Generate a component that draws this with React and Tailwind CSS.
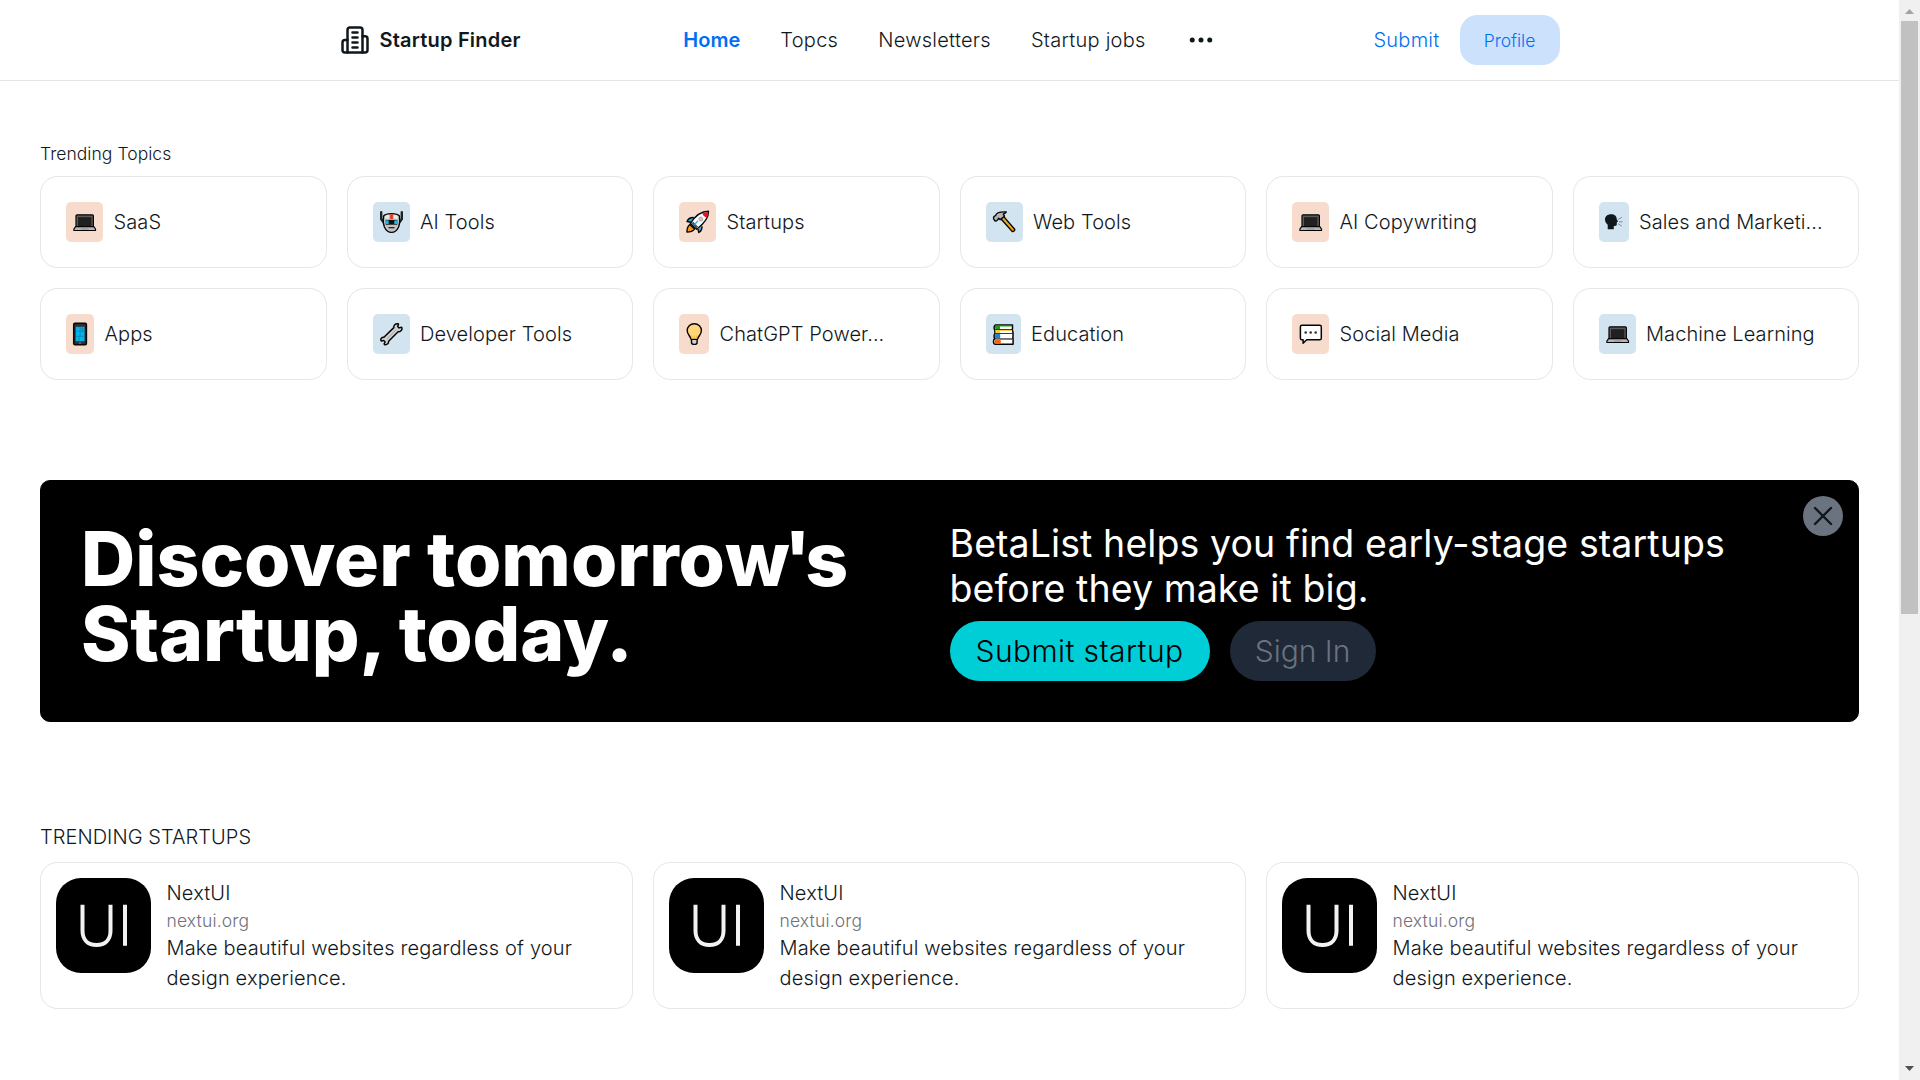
import { Ellipsis, X } from 'lucide-react';

function BuildingLogo() {
  return (
    <svg width="30" height="30" viewBox="0 0 24 24" fill="none" stroke="currentColor" strokeWidth="2" strokeLinecap="round" strokeLinejoin="round">
      <path d="M6 22V4a2 2 0 0 1 2-2h8a2 2 0 0 1 2 2v18Z" />
      <path d="M6 12H4a2 2 0 0 0-2 2v6a2 2 0 0 0 2 2h2" />
      <path d="M18 9h2a2 2 0 0 1 2 2v9a2 2 0 0 1-2 2h-2" />
      <path d="M10 6h4M10 10h4M10 14h4M10 18h4" />
    </svg>
  );
}

function Laptop() {
  return (
    <svg width="37" height="40" viewBox="0 0 37 40" fill="none">
      <path d="M11 12.8h15.400a1 1 0 0 1 1 1V25H10V13.800a1 1 0 0 1 1-1Z" fill="#5a5a5a" stroke="#050505" strokeWidth="1.200" />
      <rect x="12" y="15.200" width="13.400" height="8.800" fill="#202020" />
      <path d="M9.600 24.600h18.200l1.700 2.400v1.500H7.900V27Z" fill="#b5b5b5" stroke="#050505" strokeWidth="1.200" strokeLinejoin="round" />
      <path d="M15 27h7.400" stroke="#8c8c8c" strokeWidth=".8" />
    </svg>
  );
}

function Robot() {
  return (
    <svg width="37" height="40" viewBox="0 0 37 40" fill="none">
      <path d="M8.200 10.200v7l2.500 3.300M28.800 10.200v7l-2.500 3.300" stroke="#222" strokeWidth="2.400" strokeLinecap="round" />
      <path d="M10.600 14c1.300-1.800 4-2.300 7.900-2.300s6.600.5 7.900 2.300c.6 3.900.5 7.600-.8 10.900-1.300 3-3.800 5.400-7.100 5.400s-5.800-2.400-7.100-5.400c-1.300-3.300-1.400-7-.8-10.900Z" fill="#c2c2c2" stroke="#050505" strokeWidth="1.300" />
      <path d="M12 14.700c1-1.400 2.300-1.900 4-2v4.100h-4ZM21 12.700c1.700.1 3 .6 4 2v2.100h-4Z" fill="#e8e8e8" />
      <rect x="17.100" y="12.300" width="2.800" height="4.700" fill="#f03a17" />
      <rect x="12.700" y="17.900" width="11.600" height="4.800" fill="#101010" />
      <rect x="13" y="18.400" width="2.700" height="3.600" fill="#19b9ee" />
      <rect x="21.300" y="18.400" width="2.700" height="3.600" fill="#19b9ee" />
      <path d="M15.500 25.700h6" stroke="#151515" strokeWidth="1.200" />
    </svg>
  );
}

function Rocket() {
  return (
    <svg width="37" height="40" viewBox="0 0 37 40" fill="none">
      <path d="M12 20.200 8 19.500c1-2.600 3-4.100 6.700-4M19 27.200l.8 3.300c2.300-1.300 3.400-3.400 3.200-6.300" fill="#26b3ee" stroke="#050505" strokeWidth="1.400" strokeLinejoin="round" />
      <path d="M10.800 22.500c-2 1.500-2.900 4-2.900 7.600 3.600 0 6-1 7.600-3Z" fill="#f7931e" stroke="#050505" strokeWidth="1.400" strokeLinejoin="round" />
      <path d="M29.500 9.300c.2 6-3 11.300-11.800 18l-6.300-5.800C16.800 12.800 23.500 9.300 29.500 9.300Z" fill="#fff" stroke="#050505" strokeWidth="1.400" strokeLinejoin="round" />
      <path d="M28.900 9.900c.1 2-.3 3.900-1.200 5.700-2-.4-4-2.200-4.400-4 1.800-1 3.700-1.600 5.600-1.700Z" fill="#e81224" />
      <circle cx="21.800" cy="17" r="2" fill="#c9c9c9" stroke="#9a9a9a" strokeWidth=".8" />
      <path d="m12.300 21.500 5 4.700 1.800-1.500-4.800-4.900Z" fill="#4b5560" />
      <path d="m15.500 22.700 3.500-4" stroke="#26b3ee" strokeWidth="1.300" />
    </svg>
  );
}

function Hammer() {
  return (
    <svg width="37" height="40" viewBox="0 0 37 40" fill="none">
      <path d="m14.400 16.200 2.700-2.300 11.600 13.300c.7 1-1.600 3-2.600 2.200Z" fill="#f5a70f" stroke="#050505" strokeWidth="1.400" strokeLinejoin="round" />
      <path d="M7.600 16.800c-.4-1.700.6-3 2-3.200.4-2.400 4-4 10.700-3.700-.3 1.300-1.600 1.500-3 2.200l1.200 2.100-4.300 3.400-1.600-1.400c-.5 2-2.500 3.300-3.600 2.600Z" fill="#b5b5b5" stroke="#050505" strokeWidth="1.400" strokeLinejoin="round" />
    </svg>
  );
}

function Speaking() {
  return (
    <svg width="30" height="40" viewBox="0 0 30 40" fill="none">
      <path d="M8.700 27.300v-4.600C6.900 21.200 6 19.300 6 17.400c0-3 2.500-5.100 6-5.100 3.600 0 5.700 2 5.700 4.600l1.300 2.800-1.200.6v2.200c0 1.300-1 1.600-3 1.400v3.400Z" fill="#11181c" />
      <path d="m19.500 17.300 3-1.800M20.300 19.800h2.800M19.500 22l3 1.900" stroke="#667580" strokeWidth=".8" strokeLinecap="round" />
    </svg>
  );
}

function Phone() {
  return (
    <svg width="28" height="40" viewBox="0 0 28 40" fill="none">
      <rect x="7.700" y="9.300" width="12.700" height="21.400" rx="1.300" fill="#303030" stroke="#050505" strokeWidth="1.500" />
      <rect x="9.700" y="12.800" width="8.800" height="14.400" fill="#00b4f1" />
      <path d="M9.700 17.400h8.800M9.700 22.300h8.800M14.100 12.800v9.500M16.500 12.800v4.600M13 22.300v4.900M14.100 15h4.400" stroke="#15789f" strokeWidth=".7" />
      <path d="M13 29h2.200" stroke="#8a8a8a" />
    </svg>
  );
}

function Wrench() {
  return (
    <svg width="37" height="40" viewBox="0 0 37 40" fill="none">
      <path d="m10.900 23.300 9.900-9.700c-.4-2.300 1.500-4.200 4.100-3.900l.6.500-.8 2.200 1.400 1.500 2.300-.7.600.7c.3 2.300-1.500 4-3.900 3.900l-9.500 9.500c.2 2.400-1.700 3.800-4.200 3.200l-.2-.9.900-1.600-1.500-1.600-2.100.7-.7-.9c-.2-2 1-3.100 3.100-2.900Z" fill="#d0d0d0" stroke="#050505" strokeWidth="1.500" strokeLinejoin="round" />
      <path d="m14 24.800 9.500-9.300" stroke="#9b9b9b" strokeWidth=".8" />
    </svg>
  );
}

function Bulb() {
  return (
    <svg width="30" height="40" viewBox="0 0 30 40" fill="none">
      <path d="M12.500 24.500h5.600v4c0 1.200-1.100 1.900-2.800 1.900s-2.800-.7-2.800-1.900Z" fill="#c8d2d8" stroke="#050505" strokeWidth="1.400" />
      <path d="M15.300 9.700c4.200 0 7.100 2.900 7.100 6.800 0 4-2.900 5-4 8.900h-6.200c-1.100-3.900-4-4.900-4-8.900 0-3.900 2.900-6.800 7.100-6.800Z" fill="#ffd67b" stroke="#050505" strokeWidth="1.400" strokeLinejoin="round" />
      <path d="M13 25v-3.600M15.300 25v-3.600M17.600 25v-3.600" stroke="#f2b134" strokeWidth=".9" />
    </svg>
  );
}

function Books() {
  return (
    <svg width="35" height="40" viewBox="0 0 35 40" fill="none">
      <path d="M9.500 10.900h17v3.900l-.3 1.200.8 2v5l-.3.900.4.800v5.500H9.500c-1.600 0-2.100-1.500-2-3 0-1.400.7-2.300 1.500-2.500-1.300-1.200-1.200-4.300 0-5.200l-.2-3.500c-1.200-1.500-.8-4.400.7-5.100Z" fill="#fff" stroke="#050505" strokeWidth="1.500" strokeLinejoin="round" />
      <path d="M9.600 11.500h16.600v1H14v2.700H9.600c-.9-1-.9-2.800 0-3.700Z" fill="#16a016" />
      <path d="M9.600 16h16.400v1.100H14v2H9.600Z" fill="#ffc83d" />
      <path d="M9.600 20h4.600v4.300h-4.600c-1-1-1-3.400 0-4.300Z" fill="#1883d7" />
      <path d="M9.500 25.500h5.300v4.200H9.500c-1.300-.5-1.400-3.400 0-4.200ZM14.500 25.200h12v.8h-12Z" fill="#f7630c" />
      <path d="M9.300 15.500h17M9.300 19.500h17.500M9.300 24.800h17.500" stroke="#050505" strokeWidth=".8" />
    </svg>
  );
}

function Bubble() {
  return (
    <svg width="37" height="40" viewBox="0 0 37 40" fill="none">
      <path d="M10 11.200h17.700c1 0 1.600.6 1.600 1.600v11.400c0 1-.6 1.600-1.600 1.600H14.700l-3.600 3.400v-3.400H10c-1 0-1.600-.6-1.600-1.600V12.800c0-1 .6-1.600 1.600-1.600Z" fill="#fff" stroke="#050505" strokeWidth="1.500" strokeLinejoin="round" />
      <circle cx="13.700" cy="18.500" r="1.300" fill="#333" />
      <circle cx="18.700" cy="18.500" r="1.300" fill="#333" />
      <circle cx="23.700" cy="18.500" r="1.300" fill="#333" />
    </svg>
  );
}

const topics = [
  ['SaaS', Laptop],
  ['AI Tools', Robot],
  ['Startups', Rocket],
  ['Web Tools', Hammer],
  ['AI Copywriting', Laptop],
  ['Sales and Marketi...', Speaking],
  ['Apps', Phone],
  ['Developer Tools', Wrench],
  ['ChatGPT Power...', Bulb],
  ['Education', Books],
  ['Social Media', Bubble],
  ['Machine Learning', Laptop],
];

function Header() {
  return (
    <header className="h-[81px] border-b border-[#e4e4e9]">
      <div className="mx-auto flex h-20 w-[1280px] items-center justify-between px-[30px]">
        <div className="flex flex-1 items-center gap-2.5">
          <BuildingLogo />
          <p className="font-semibold tracking-[0.2px]">Startup Finder</p>
        </div>
        <nav className="flex items-center gap-10 tracking-[0.27px]">
          <a className="font-semibold tracking-normal text-[#0070f3]">Home</a>
          <a>Topcs</a>
          <a>Newsletters</a>
          <a>Startup jobs</a>
          <Ellipsis size={30} />
        </nav>
        <div className="flex flex-1 items-center justify-end gap-5 text-[#0070f3]">
          <a className="tracking-[0.25px]">Submit</a>
          <button className="h-[50px] w-[100px] rounded-[17.5px] bg-[#cce2fc] text-[17.5px] leading-[25px]">Profile</button>
        </div>
      </div>
    </header>
  );
}

function StartupCard() {
  return (
    <article className="flex gap-[15px] rounded-[17.5px] border border-[#e6e6e9] p-[15px]">
      <div className="size-[95px] shrink-0 rounded-[25px] bg-black">
        <svg width="95" height="95" viewBox="0 0 95 95" fill="none" stroke="#f2f2f2" strokeWidth="4">
          <path d="M26.500 26.800v26c0 9 5.500 14.200 14 14.200s14-5.200 14-14.200v-26M69 26.800v41" />
        </svg>
      </div>
      <div className="pl-[0.5px] tracking-[0.15px]">
        <h3>NextUI</h3>
        <p className="text-[17.5px] leading-[25px] text-[#71717a]">nextui.org</p>
        <p>Make beautiful websites regardless of your<br />design experience.</p>
      </div>
    </article>
  );
}

function Scrollbar() {
  return (
    <div className="flex w-[21px] shrink-0 flex-col items-center bg-[#f0f0f0]">
      <div className="flex h-[21px] shrink-0 items-center pt-[2px]">
        <svg width="9" height="5" viewBox="0 0 9 5"><path d="M0 5h9L4.500 0Z" fill="#a3a3a3" /></svg>
      </div>
      <div className="h-[593px] w-[17px] bg-[#c1c1c1]" />
      <div className="mt-auto flex h-[21px] shrink-0 items-center pb-[2px]">
        <svg width="9" height="5" viewBox="0 0 9 5"><path d="M0 0h9L4.500 5Z" fill="#505050" /></svg>
      </div>
    </div>
  );
}

export default function App() {
  return (
    <div className="flex h-screen overflow-hidden bg-white font-['Inter',sans-serif] text-[20px] leading-[30px] font-[350] text-[#11181c]">
      <div className="min-w-0 flex-1">
        <Header />
        <main className="flex flex-col gap-[100px] px-10 pt-[60px]">
          <section>
            <h2 className="mb-2.5 text-[17.5px] leading-[25px] tracking-[0.05px]">Trending Topics</h2>
            <div className="grid grid-cols-6 gap-5">
              {topics.map(([label, Icon], i) => (
                <div key={label} className="flex items-center gap-[10.5px] rounded-[17.5px] border border-[#e6e6e9] p-[25px]">
                  <span className={i % 2 ? 'h-10 shrink-0 rounded-[5px] bg-[#d2e4f0]' : 'h-10 shrink-0 rounded-[5px] bg-[#f7dccd]'}>
                    <Icon />
                  </span>
                  <span className="tracking-[0.09px] whitespace-nowrap">{label}</span>
                </div>
              ))}
            </div>
          </section>

          <section className="relative grid grid-cols-2 rounded-[10px] border border-black bg-black p-10 text-white">
            <h1 className="text-[75px] leading-[75px] font-extrabold">
              Discover tomorro<span className="tracking-[-5.500px]">w'</span>s<br />
              <span className="tracking-[-0.2px]">Startup, today.</span>
            </h1>
            <div>
              <p className="mb-2.5 text-[37.5px] leading-[45px] font-normal tracking-[0.09px]">BetaList helps you find early-stage startups<br />before they make it big.</p>
              <div className="flex gap-5 text-[30px] leading-10">
                <button className="h-[60px] w-[260px] rounded-full bg-[#00ced6] tracking-[0.4px] text-black">Submit startup</button>
                <button className="h-[60px] w-[146px] rounded-full bg-[#1f2937] text-[#6b7280]">Sign In</button>
              </div>
            </div>
            <button className="absolute top-[15px] right-[15px] flex size-10 items-center justify-center rounded-full bg-[#6b7280] text-[#11181c]">
              <X size={32} strokeWidth={1.800} />
            </button>
          </section>

          <section>
            <h2 className="mb-2.5 tracking-[0.05px]">TRENDING STARTUPS</h2>
            <div className="grid grid-cols-3 gap-5">
              <StartupCard />
              <StartupCard />
              <StartupCard />
            </div>
          </section>
        </main>
      </div>
      <Scrollbar />
    </div>
  );
}
